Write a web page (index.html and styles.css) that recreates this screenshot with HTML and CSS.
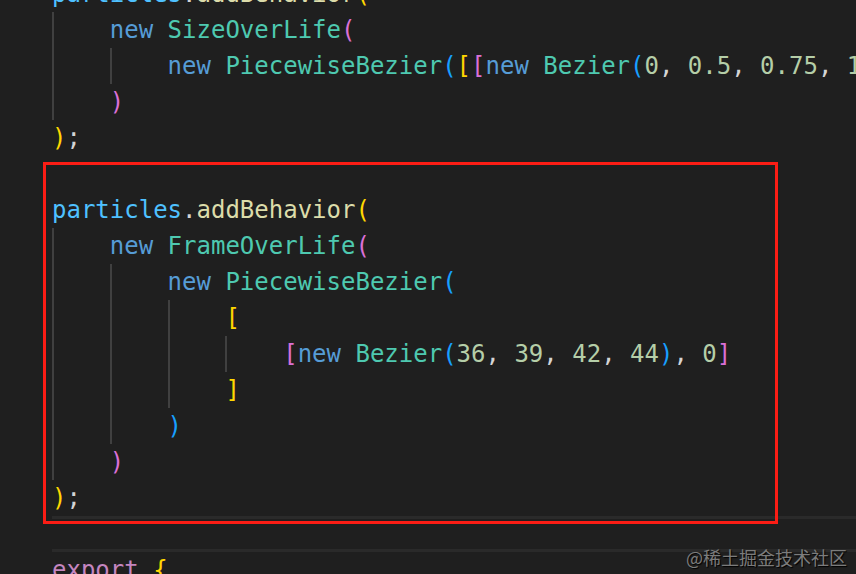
FILE: index.html
```html
<!DOCTYPE html>
<html>
<head>
<meta charset="utf-8">
<link rel="stylesheet" href="styles.css">
</head>
<body>
<div class="editor">
  <div class="code">
    <div class="line"><span class="var">particles</span><span class="pn">.</span><span class="fn">addBehavior</span><span class="b1">(</span></div>
    <div class="line"><span class="g">    </span><span class="kw">new</span> <span class="cls">SizeOverLife</span><span class="b2">(</span></div>
    <div class="line"><span class="g">    </span><span class="g">    </span><span class="kw">new</span> <span class="cls">PiecewiseBezier</span><span class="b3">(</span><span class="b1">[</span><span class="b2">[</span><span class="kw">new</span> <span class="cls">Bezier</span><span class="b3">(</span><span class="num">0</span><span class="pn">, </span><span class="num">0.5</span><span class="pn">, </span><span class="num">0.75</span><span class="pn">, </span><span class="num">1</span><span class="b3">)</span><span class="pn">, </span><span class="num">0</span><span class="b2">]</span><span class="b1">]</span><span class="b3">)</span></div>
    <div class="line"><span class="g">    </span><span class="b2">)</span></div>
    <div class="line"><span class="b1">)</span><span class="pn">;</span></div>
    <div class="line"> </div>
    <div class="line"><span class="var">particles</span><span class="pn">.</span><span class="fn">addBehavior</span><span class="b1">(</span></div>
    <div class="line"><span class="g">    </span><span class="kw">new</span> <span class="cls">FrameOverLife</span><span class="b2">(</span></div>
    <div class="line"><span class="g">    </span><span class="g">    </span><span class="kw">new</span> <span class="cls">PiecewiseBezier</span><span class="b3">(</span></div>
    <div class="line"><span class="g">    </span><span class="g">    </span><span class="g">    </span><span class="b1">[</span></div>
    <div class="line"><span class="g">    </span><span class="g">    </span><span class="g">    </span><span class="g">    </span><span class="b2">[</span><span class="kw">new</span> <span class="cls">Bezier</span><span class="b3">(</span><span class="num">36</span><span class="pn">, </span><span class="num">39</span><span class="pn">, </span><span class="num">42</span><span class="pn">, </span><span class="num">44</span><span class="b3">)</span><span class="pn">, </span><span class="num">0</span><span class="b2">]</span></div>
    <div class="line"><span class="g">    </span><span class="g">    </span><span class="g">    </span><span class="b1">]</span></div>
    <div class="line"><span class="g">    </span><span class="g">    </span><span class="b3">)</span></div>
    <div class="line"><span class="g">    </span><span class="b2">)</span></div>
    <div class="line"><span class="b1">)</span><span class="pn">;</span></div>
    <div class="line current"> </div>
    <div class="line"><span class="kw2">export</span> <span class="b1">{</span></div>
  </div>
  <div class="mark"></div>
  <div class="watermark">@稀土掘金技术社区</div>
</div>
</body>
</html>
```
FILE: styles.css
```css
html, body {
  margin: 0;
  padding: 0;
  background: #1f1f1f;
}
.editor {
  position: relative;
  width: 856px;
  height: 574px;
  overflow: hidden;
  background: #1f1f1f;
}
.code {
  margin-top: -24px;
  padding-left: 52px;
  font-family: "DejaVu Sans Mono", "Liberation Mono", monospace;
  font-size: 24px;
  line-height: 36px;
  color: #d4d4d4;
}
.line {
  height: 36px;
  white-space: pre;
}
.line.current {
  box-sizing: border-box;
  border-top: 3px solid #2a2a2a;
  border-bottom: 3px solid #2a2a2a;
  margin-right: -10px;
}
.g {
  display: inline-block;
  height: 36px;
  vertical-align: top;
  box-shadow: inset 2px 0 0 #404040;
}
.var { color: #4fc1ff; }
.fn { color: #dcdcaa; }
.pn { color: #d4d4d4; }
.kw { color: #569cd6; }
.kw2 { color: #c586c0; }
.cls { color: #4ec9b0; }
.num { color: #b5cea8; }
.b1 { color: #ffd700; }
.b2 { color: #da70d6; }
.b3 { color: #179fff; }
.mark {
  position: absolute;
  left: 43px;
  top: 162px;
  width: 729px;
  height: 356px;
  border: 3px solid #fb1d15;
}
.watermark {
  position: absolute;
  right: 9px;
  top: 544px;
  font-family: "Noto Sans CJK SC", sans-serif;
  font-size: 18px;
  line-height: 26px;
  color: #7c7c7c;
  text-shadow: 1px 1px 1px #000;
}
```
